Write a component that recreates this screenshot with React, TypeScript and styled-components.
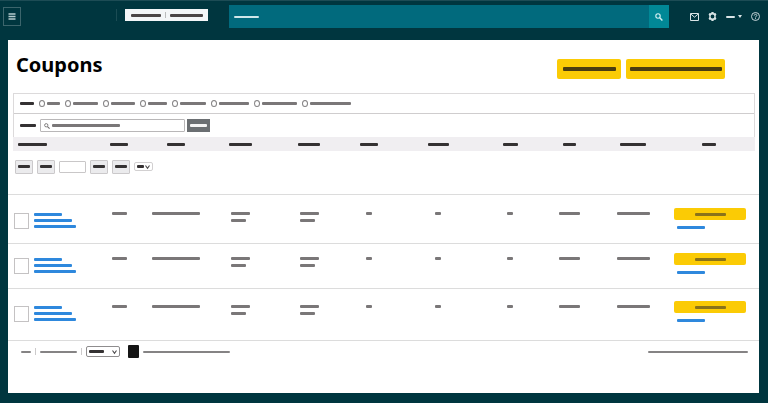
import React from "react";
import styled, { createGlobalStyle } from "styled-components";

const GlobalStyle = createGlobalStyle`
  *, *::before, *::after { box-sizing: border-box; }
  body {
    margin: 0;
    background: #00363f;
    font-family: "Noto Sans", "Open Sans", sans-serif;
  }
  button, input, select { margin: 0; padding: 0; font: inherit; }
  button { cursor: pointer; }
`;

const Page = styled.div`
  min-height: 100vh;
  display: flex;
  flex-direction: column;
  padding: 0 9px 10px 8px;
`;

const Line = styled.span<{ $w: number; $h?: number; $color?: string }>`
  display: block;
  flex: none;
  width: ${(p) => p.$w}px;
  height: ${(p) => p.$h ?? 3}px;
  border-radius: 1px;
  background: ${(p) => p.$color ?? "#7a7778"};
`;

/* Top bar */

const TopBar = styled.header`
  height: 40px;
  margin: 0 -9px 0 -8px;
  padding: 5px 8px 0 3px;
  display: flex;
  align-items: flex-start;
  border-top: 1px solid #1d4c55;
`;

const MenuButton = styled.button`
  width: 18px;
  height: 19px;
  margin-top: 1px;
  display: grid;
  place-items: center;
  border: 1px solid #3c656c;
  background: none;
  color: #b5cbce;
`;

const Rule = styled.span<{ $h: number; $color: string }>`
  flex: none;
  width: 1px;
  height: ${(p) => p.$h}px;
  background: ${(p) => p.$color};
`;

const Brand = styled.div`
  display: flex;
  align-items: flex-start;
  gap: 8px;
  margin: 3px 21px 0 95px;
`;

const AccountButton = styled.button`
  height: 12px;
  width: 83px;
  display: flex;
  align-items: center;
  justify-content: center;
  gap: 4px;
  border: 0;
  background: #f3f6f8;
`;

const GlobalSearch = styled.form`
  flex: 1;
  height: 23px;
  margin-top: -1px;
  display: flex;
  align-items: stretch;
  background: #016a7d;
`;

const SearchLabel = styled.label`
  flex: 1;
  display: flex;
  align-items: center;
  padding-left: 5px;
`;

const BareInput = styled.input`
  flex: 1;
  min-width: 0;
  height: 10px;
  border: 0;
  outline: 0;
  background: none;
  font-size: 8px;
`;

const SearchButton = styled.button`
  width: 20px;
  display: grid;
  place-items: center;
  border: 0;
  background: #018896;
  color: #d5f1f3;
`;

const Tools = styled.nav`
  height: 21px;
  display: flex;
  align-items: center;
  gap: 9px;
  margin-left: 21px;
`;

const ToolButton = styled.button`
  display: flex;
  align-items: center;
  gap: 3px;
  border: 0;
  background: none;
  color: #d9e4e6;

  svg { display: block; }
`;

/* Panel */

const Panel = styled.main`
  flex: 1;
  background: #fff;
`;

const TitleRow = styled.div`
  height: 53px;
  display: flex;
  align-items: flex-start;
  gap: 5px;
  padding: 11px 34px 0 8px;
`;

const Title = styled.h1`
  flex: 1;
  margin: 0;
  font-size: 20px;
  line-height: 28px;
  font-weight: 700;
  color: #000;
`;

const YellowButton = styled.button<{ $w: number; $h: number }>`
  width: ${(p) => p.$w}px;
  height: ${(p) => p.$h}px;
  display: grid;
  place-items: center;
  border: 0;
  border-radius: 2px;
  background: #fbcb05;
`;

const TitleActions = styled.div`
  display: flex;
  gap: 5px;
  margin-top: 8px;
`;

const Filters = styled.section`
  margin: 0 4px 0 5px;
  border: 1px solid #dcdadb;
  border-bottom: 0;
`;

const FilterRow = styled.fieldset`
  height: 20px;
  margin: 0;
  padding: 0 6px;
  display: flex;
  align-items: center;
  gap: 5px;
  border: 0;
  border-bottom: 1px solid #cfcdce;
`;

const RadioLabel = styled.label`
  display: flex;
  align-items: center;
  gap: 2px;
`;

const Radio = styled.input`
  appearance: none;
  width: 6px;
  height: 7px;
  border: 1px solid #858384;
  border-radius: 50%;
  background: #fff;
  &:checked { background: #858384; }
`;

const SearchRow = styled.form`
  height: 23px;
  padding: 0 6px;
  display: flex;
  align-items: center;
  gap: 2px;
`;

const SearchBox = styled.label`
  width: 145px;
  height: 13px;
  margin-left: 2px;
  padding: 0 3px;
  display: flex;
  align-items: center;
  gap: 2px;
  border: 1px solid #b9b7b8;
  border-radius: 1px;
  color: #6b6869;
`;

const GrayButton = styled.button`
  width: 23px;
  height: 13px;
  display: grid;
  place-items: center;
  border: 0;
  background: #6b6f72;
`;

/* Table */

const Table = styled.table`
  width: 100%;
  table-layout: fixed;
  border-collapse: separate;
  border-spacing: 0;

  td, th { padding: 0; }
`;

const HeadCell = styled.th`
  && { height: 14px; padding-top: 1px; }
  background: #f0eef1;
  background-clip: padding-box;

  ${Line} { margin: 0 auto; }

  &:first-child { border-left: 5px solid #fff; }
  &:first-child ${Line} { margin-left: 5px; }
  &&:last-child { border-right: 4px solid #fff; padding-left: 4px; }
`;

const PagerCell = styled.td`
  height: 44px;
  vertical-align: top;
  border-bottom: 1px solid #dcdcdc;
`;

const Pager = styled.div`
  height: 31px;
  display: flex;
  align-items: center;
  gap: 4px;
  padding-left: 7px;
`;

const PageButton = styled.button`
  width: 18px;
  height: 14px;
  display: grid;
  place-items: center;
  border: 1px solid #cbc9cb;
  border-radius: 1px;
  background: #ebebed;
`;

const PageInput = styled.input`
  width: 27px;
  height: 12px;
  border: 1px solid #c9c7c8;
  border-radius: 1px;
  background: #fff;
  font-size: 8px;
`;

const SelectBox = styled.label<{ $w: number; $h: number; $border: string }>`
  width: ${(p) => p.$w}px;
  height: ${(p) => p.$h}px;
  display: grid;
  align-items: center;

  > * { grid-area: 1 / 1; }

  select {
    appearance: none;
    width: 100%;
    height: ${(p) => p.$h}px;
    border: 1px solid ${(p) => p.$border};
    border-radius: 2px;
    background: #fff;
    font-size: 8px;
  }
`;

const SelectFace = styled.span`
  display: flex;
  align-items: center;
  justify-content: space-between;
  padding: 0 2px 0 3px;
  pointer-events: none;
  color: #4a4849;
`;

const Row = styled.tr<{ $h: number; $pad: number }>`
  td {
    height: ${(p) => p.$h}px;
    padding-top: ${(p) => p.$pad}px;
    vertical-align: top;
    border-bottom: 1px solid #dcdcdc;
  }

  td:last-child { padding-left: 2px; }
`;

const NameCell = styled.div`
  display: flex;
  gap: 5px;
  padding: 5px 0 0 6px;
`;

const Check = styled.input`
  appearance: none;
  flex: none;
  width: 15px;
  height: 16px;
  border: 1px solid #c4c2c3;
  background: #fff;
  &:checked { background: #2f80d0; }
`;

const NameLink = styled.a`
  display: flex;
  flex-direction: column;
  gap: 3px;
`;

const TextCell = styled.div<{ $w: number }>`
  width: ${(p) => p.$w}px;
  margin: 0 auto;
  padding-top: 4px;
  display: flex;
  flex-direction: column;
  gap: 4px;
`;

const ActionCell = styled.div`
  width: 72px;
  margin: 0 auto;
  display: flex;
  flex-direction: column;
  gap: 6px;
`;

const ActionLink = styled.a`
  margin-left: 3px;
`;

/* Footer */

const Footer = styled.footer`
  display: flex;
  align-items: center;
  height: 21px;
  padding: 0 11px 0 13px;
`;

const FooterGroup = styled.div`
  flex: 1;
  display: flex;
  align-items: center;
  gap: 4px;
`;

const Badge = styled.span`
  width: 11px;
  height: 13px;
  margin-left: 4px;
  border-radius: 1px;
  background: #151515;
`;

const DARK = "#343132";
const BLUE = "#2e88dd";
const FOOT = "#858384";

const filters = [13, 25, 24, 19, 26, 30, 35, 41];

const columns = [
  { name: "Coupon", width: 92, head: 29, cell: [] },
  { name: "Status", width: 38, head: 18, cell: [15] },
  { name: "Title", width: 76, head: 18, cell: [48] },
  { name: "Start", width: 53, head: 23, cell: [19, 15] },
  { name: "End", width: 84, head: 22, cell: [19, 15] },
  { name: "Discount", width: 36, head: 18, cell: [6] },
  { name: "Budget", width: 102, head: 21, cell: [6] },
  { name: "Clips", width: 42, head: 15, cell: [6] },
  { name: "Spend", width: 76, head: 13, cell: [21] },
  { name: "Sales", width: 52, head: 26, cell: [33] },
  { name: "Actions", width: 100, head: 14, cell: [] },
];

const rows = [
  { id: 1, height: 49, pad: 13 },
  { id: 2, height: 45, pad: 9 },
  { id: 3, height: 52, pad: 12 },
];

const Magnifier = ({ size }: { size: number }) => (
  <svg width={size} height={size} viewBox="0 0 8 8" fill="none" stroke="currentColor">
    <circle cx="3" cy="3" r="2.2" strokeWidth="1.1" />
    <path d="M4.7 4.7 7.4 7.4" strokeWidth="1.4" />
  </svg>
);

const Chevron = () => (
  <svg width="7" height="6" viewBox="0 0 7 6" fill="none" stroke="currentColor">
    <path d="M1.5 1.5 3.5 4.3 5.5 1.5" strokeWidth="1.1" />
  </svg>
);

export default function App() {
  return (
    <>
      <GlobalStyle />
      <Page>
        <TopBar>
          <MenuButton aria-label="Menu">
            <svg width="8" height="7" viewBox="0 0 8 7" stroke="currentColor" strokeWidth="1.3">
              <path d="M.5 1h7M.5 3.5h7M.5 6h7" />
            </svg>
          </MenuButton>
          <Brand>
            <Rule $h={12} $color="#1b4c54" />
            <AccountButton aria-label="Account and marketplace">
              <Line $w={30} $color="#4a4546" />
              <Rule $h={6} $color="#b9bbbc" />
              <Line $w={33} $color="#4a4546" />
            </AccountButton>
          </Brand>
          <GlobalSearch onSubmit={(e) => e.preventDefault()}>
            <SearchLabel>
              <Line $w={25} $h={2} $color="#cfe7ea" />
              <BareInput aria-label="Search the site" />
            </SearchLabel>
            <SearchButton aria-label="Search">
              <Magnifier size={8} />
            </SearchButton>
          </GlobalSearch>
          <Tools>
            <ToolButton aria-label="Messages">
              <svg width="9" height="8" viewBox="0 0 9 8" fill="none" stroke="currentColor">
                <path d="M.5.5h8v7h-8zM.8 1l3.7 3.2L8.2 1" />
              </svg>
            </ToolButton>
            <ToolButton aria-label="Settings">
              <svg width="9" height="9" viewBox="0 0 9 9" fill="currentColor" fillRule="evenodd">
                <path d="M3.5 0h2l.4 1.3L7.4 1l1 1.6-.7 1.1v1.6l.7 1.1-1 1.6-1.5-.3L5.5 9h-2l-.4-1.3L1.6 8l-1-1.6.7-1.1V3.700L.6 2.600 1.600 1l1.500.3zM4.500 2.600a1.900 1.900 0 1 0 0 3.800 1.900 1.900 0 0 0 0-3.800z" />
              </svg>
            </ToolButton>
            <ToolButton aria-label="Language">
              <Line $w={9} $h={2} $color="#d9e4e6" />
              <svg width="4" height="3" viewBox="0 0 4 3" fill="currentColor">
                <path d="M0 0h4L2 3z" />
              </svg>
            </ToolButton>
            <ToolButton aria-label="Help">
              <svg width="9" height="9" viewBox="0 0 9 9" fill="none" stroke="currentColor">
                <circle cx="4.5" cy="4.5" r="4" strokeWidth=".9" />
                <path d="M3.200 3.600c0-1.700 2.600-1.700 2.600-.1 0 .9-1.300.9-1.300 2M4.500 6.200v1" strokeWidth=".9" />
              </svg>
            </ToolButton>
          </Tools>
        </TopBar>

        <Panel>
          <TitleRow>
            <Title>Coupons</Title>
            <TitleActions>
              <YellowButton $w={64} $h={20} aria-label="Create coupon">
                <Line $w={53} $h={4} $color="#4b3d10" />
              </YellowButton>
              <YellowButton $w={99} $h={20} aria-label="Create coupons in bulk">
                <Line $w={92} $h={4} $color="#4b3d10" />
              </YellowButton>
            </TitleActions>
          </TitleRow>

          <Filters>
            <FilterRow aria-label="Filter by status">
              <Line $w={14} $color={DARK} />
              {filters.map((w, i) => (
                <RadioLabel key={i}>
                  <Radio type="radio" name="status" aria-label={`Status ${i + 1}`} />
                  <Line $w={w} />
                </RadioLabel>
              ))}
            </FilterRow>
            <SearchRow onSubmit={(e) => e.preventDefault()}>
              <Line $w={16} $color={DARK} />
              <SearchBox>
                <Magnifier size={6} />
                <Line $w={68} />
                <BareInput aria-label="Search coupons" />
              </SearchBox>
              <GrayButton aria-label="Search">
                <Line $w={17} $color="#f4f4f4" />
              </GrayButton>
            </SearchRow>
          </Filters>

          <Table>
            <colgroup>
              {columns.map((c) => (
                <col key={c.name} width={c.width} />
              ))}
            </colgroup>
            <thead>
              <tr>
                {columns.map((c) => (
                  <HeadCell key={c.name} scope="col" aria-label={c.name}>
                    <Line $w={c.head} $color={DARK} />
                  </HeadCell>
                ))}
              </tr>
            </thead>
            <tbody>
              <tr>
                <PagerCell colSpan={columns.length}>
                  <Pager>
                    <PageButton aria-label="First page"><Line $w={12} $color={DARK} /></PageButton>
                    <PageButton aria-label="Previous page"><Line $w={12} $color={DARK} /></PageButton>
                    <PageInput aria-label="Page number" />
                    <PageButton aria-label="Next page"><Line $w={12} $color={DARK} /></PageButton>
                    <PageButton aria-label="Last page"><Line $w={12} $color={DARK} /></PageButton>
                    <SelectBox $w={19} $h={9} $border="#d2d0d1">
                      <select aria-label="Rows per page" />
                      <SelectFace>
                        <Line $w={7} $color={DARK} />
                        <Chevron />
                      </SelectFace>
                    </SelectBox>
                  </Pager>
                </PagerCell>
              </tr>
              {rows.map((r) => (
                <Row key={r.id} $h={r.height} $pad={r.pad}>
                  <td>
                    <NameCell>
                      <Check type="checkbox" aria-label={`Select coupon ${r.id}`} />
                      <NameLink href="#" aria-label={`Coupon ${r.id}`}>
                        <Line $w={28} $color={BLUE} />
                        <Line $w={38} $color={BLUE} />
                        <Line $w={42} $color={BLUE} />
                      </NameLink>
                    </NameCell>
                  </td>
                  {columns.slice(1, -1).map((c) => (
                    <td key={c.name}>
                      <TextCell $w={c.cell[0]}>
                        {c.cell.map((w, i) => (
                          <Line key={i} $w={w} />
                        ))}
                      </TextCell>
                    </td>
                  ))}
                  <td>
                    <ActionCell>
                      <YellowButton $w={72} $h={12} aria-label={`Edit coupon ${r.id}`}>
                        <Line $w={31} $color="#8a731a" />
                      </YellowButton>
                      <ActionLink href="#" aria-label={`View coupon ${r.id}`}>
                        <Line $w={28} $color={BLUE} />
                      </ActionLink>
                    </ActionCell>
                  </td>
                </Row>
              ))}
            </tbody>
          </Table>

          <Footer>
            <FooterGroup>
              <Line $w={10} $h={2} $color={FOOT} />
              <Rule $h={7} $color="#cccacb" />
              <Line $w={37} $h={2} $color={FOOT} />
              <Rule $h={7} $color="#cccacb" />
              <SelectBox $w={34} $h={11} $border="#8f8d8e">
                <select aria-label="Language" />
                <SelectFace>
                  <Line $w={15} $color={DARK} />
                  <Chevron />
                </SelectFace>
              </SelectBox>
              <Badge />
              <Line $w={87} $h={2} $color={FOOT} />
            </FooterGroup>
            <Line $w={100} $h={2} $color={FOOT} />
          </Footer>
        </Panel>
      </Page>
    </>
  );
}
